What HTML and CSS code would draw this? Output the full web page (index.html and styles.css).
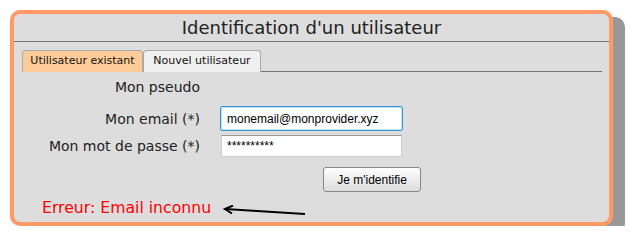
FILE: index.html
```html
<!DOCTYPE html>
<html lang="fr">
<head>
<meta charset="utf-8">
<title>Identification</title>
<link rel="stylesheet" href="styles.css">
</head>
<body>
<div class="panel">
  <h1 class="title">Identification d'un utilisateur</h1>
  <div class="tabs">
    <span class="tab tab-active">Utilisateur existant</span>
    <span class="tab">Nouvel utilisateur</span>
  </div>
  <div class="form">
    <div class="row row-pseudo">
      <span class="label">Mon pseudo</span>
      <span></span>
    </div>
    <div class="row">
      <span class="label">Mon email (*)</span>
      <input class="field field-focus" type="text" value="monemail@monprovider.xyz">
    </div>
    <div class="row">
      <span class="label">Mon mot de passe (*)</span>
      <input class="field field-pass" type="text" value="**********">
    </div>
    <div class="row row-btn">
      <span></span>
      <div><button class="btn" type="button">Je m'identifie</button></div>
    </div>
  </div>
  <div class="error">
    <span class="error-text">Erreur: Email inconnu</span>
    <svg class="arrow" width="83" height="12" viewBox="0 0 83 12">
      <path d="M2 4 L82 9" stroke="#000" stroke-width="2" fill="none"/>
      <path d="M10 0.5 L2 4 L9 8.5" stroke="#000" stroke-width="2" fill="none" stroke-linejoin="miter"/>
    </svg>
  </div>
</div>
</body>
</html>
```

FILE: styles.css
```css
html, body {
  margin: 0;
  padding: 0;
  background: #ffffff;
}
body {
  padding: 10px 0 0 10px;
  font-family: "DejaVu Sans", Verdana, sans-serif;
}
.panel {
  box-sizing: border-box;
  width: 603px;
  height: 216px;
  border: 4px solid #ff9966;
  border-radius: 10px;
  background: #dddddd;
  box-shadow: 12px 7px 0 #999999;
}
.title {
  margin: 0;
  height: 27px;
  border-bottom: 1px solid #777777;
  font-weight: normal;
  font-size: 18px;
  line-height: 27px;
  text-align: center;
  color: #222222;
}
.tabs {
  display: flex;
  margin: 8px 7px 0 8px;
  border-bottom: 1px solid #777777;
  height: 21px;
}
.tab {
  box-sizing: border-box;
  height: 22px;
  border: 1px solid #aaaaaa;
  border-bottom: none;
  border-radius: 4px 4px 0 0;
  background: #f0f0f0;
  font-size: 11px;
  line-height: 20px;
  padding: 0;
  text-align: center;
  white-space: nowrap;
  color: #111111;
}
.tab-active {
  background: #ffcc99;
  width: 121px;
}
.tab + .tab {
  width: 118px;
}
.form {
  display: flex;
  flex-direction: column;
  gap: 4px;
}
.row {
  display: grid;
  grid-template-columns: 186px 183px;
  column-gap: 20px;
  align-items: center;
}
.row-pseudo {
  height: 30px;
}
.label {
  text-align: right;
  font-size: 14px;
  color: #222222;
}
.field {
  box-sizing: border-box;
  margin: 0;
  font-family: "Liberation Sans", Arial, sans-serif;
  font-size: 12px;
  color: #000;
  background: #ffffff;
  outline: none;
}
.field-focus {
  width: 183px;
  height: 25px;
  border: 1px solid #3399dd;
  border-radius: 2px;
  box-shadow: inset 0 0 0 1px #bfe0f5;
  padding: 0 6px;
}
.field-pass {
  width: 181px;
  height: 22px;
  border: 1px solid #cccccc;
  border-top-color: #999999;
  padding: 0 5px;
  margin-left: 1px;
}
.row-btn {
  margin-top: 6px;
}
.btn {
  margin: 0 0 0 103px;
  width: 98px;
  height: 25px;
  border: 1px solid #888888;
  border-radius: 3px;
  background: linear-gradient(#ffffff, #dcdcdc);
  font-family: "Liberation Sans", Arial, sans-serif;
  font-size: 12px;
  color: #000;
  padding: 0;
}
.error {
  display: flex;
  align-items: center;
  gap: 12px;
  margin: 6px 0 0 28px;
}
.error-text {
  color: #ff0000;
  font-size: 15.7px;
}
.arrow {
  display: block;
  margin-top: 6px;
}
```
